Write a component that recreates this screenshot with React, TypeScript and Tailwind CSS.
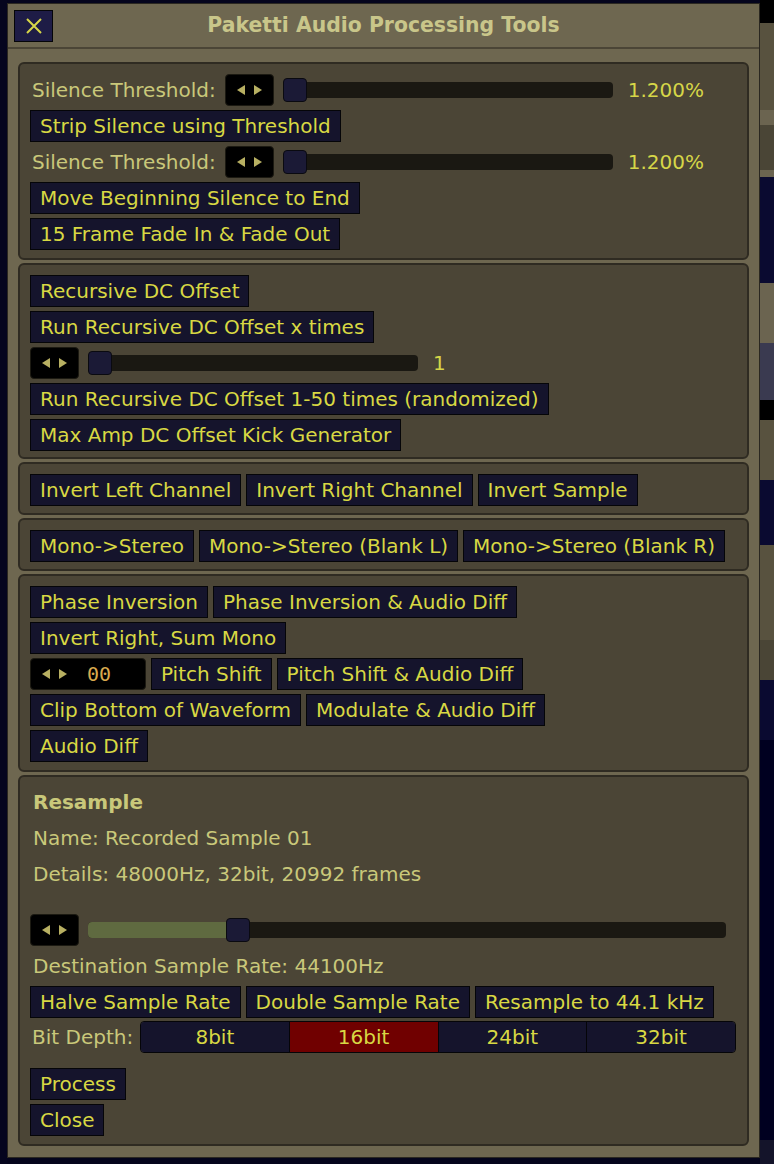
import React from "react"

const font = { fontFamily: '"DejaVu Sans", "Noto Sans", sans-serif' }

const Btn = ({ label }: { label: string }): JSX.Element => (
	<button className="h-[32px] shrink-0 whitespace-nowrap border border-[#050508] bg-[#15142c] px-[9px] text-[20px] leading-none text-[#d8d843]">
		{label}
	</button>
)

const Arrows = ({ value }: { value?: string }): JSX.Element => (
	<div
		className={`flex h-[32px] shrink-0 items-center gap-[7px] rounded-[4px] border border-[#1c1a12] bg-black pl-[10px] ${
			value ? "w-[116px]" : "w-[49px]"
		}`}
	>
		<svg width="10" height="12" viewBox="0 0 10 12">
			<path d="M9 1 L1 6 L9 11 Z" fill="#b8b062" />
		</svg>
		<svg width="10" height="12" viewBox="0 0 10 12">
			<path d="M1 1 L9 6 L1 11 Z" fill="#b8b062" />
		</svg>
		{value && (
			<span className="ml-[12px] text-[20px] text-[#d9a94e]" style={{ fontFamily: '"DejaVu Sans Mono", monospace' }}>
				{value}
			</span>
		)}
	</div>
)

const Slider = ({ width, pos, fill }: { width: string; pos: number; fill?: boolean }): JSX.Element => (
	<div className={`relative flex h-[24px] items-center ${width}`}>
		<div className="h-[16px] w-full overflow-hidden rounded-[4px] bg-[#1a1812]">
			{fill && <div className="h-full bg-[#5f6a40]" style={{ width: pos + 4 }} />}
		</div>
		<div
			className="absolute top-0 h-[24px] w-[24px] rounded-[4px] border border-[#0a0a10] bg-[#1b1a36]"
			style={{ left: pos }}
		/>
	</div>
)

const Panel = ({ children, className }: { children: React.ReactNode; className?: string }): JSX.Element => (
	<div className={`flex flex-col gap-[4px] rounded-[6px] border-2 border-[#2f2b22] bg-[#4b4536] px-[10px] ${className ?? ""}`}>
		{children}
	</div>
)

const Row = ({ children }: { children: React.ReactNode }): JSX.Element => (
	<div className="flex h-[32px] items-center gap-[5px]">{children}</div>
)

const Label = ({ children, className }: { children: React.ReactNode; className?: string }): JSX.Element => (
	<span className={`whitespace-nowrap text-[20px] text-[#c9c87a] ${className ?? ""}`}>{children}</span>
)

const ThresholdRow = (): JSX.Element => (
	<Row>
		<Label className="ml-[2px] mr-[4px]">Silence Threshold:</Label>
		<Arrows />
		<div className="ml-[4px]">
			<Slider width="w-[330px]" pos={0} />
		</div>
		<Label className="ml-[10px] text-[#d6d648]">1.200%</Label>
	</Row>
)

const RightStrip = (): JSX.Element => (
	<div className="flex w-[14px] flex-col">
		<div className="h-[23px] bg-black" />
		<div className="h-[87px] bg-[#58523f]" />
		<div className="h-[15px] bg-[#6b6450]" />
		<div className="h-[45px] bg-[#4a4536]" />
		<div className="h-[7px] bg-[#6b6450]" />
		<div className="h-[106px] bg-[#0a0a30]" />
		<div className="h-[60px] bg-[#6b6450]" />
		<div className="h-[57px] bg-[#3a3a50]" />
		<div className="h-[20px] bg-black" />
		<div className="h-[60px] bg-[#58523f]" />
		<div className="h-[65px] bg-[#0a0a30]" />
		<div className="h-[95px] bg-[#58523f]" />
		<div className="h-[40px] bg-[#4a4536]" />
		<div className="h-[60px] bg-[#0a0a30]" />
		<div className="h-[400px] bg-[#000020]" />
		<div className="flex-1 bg-[#14142a]" />
	</div>
)

const App = (): JSX.Element => {
	return (
		<div className="flex h-[1164px] w-[774px] overflow-hidden bg-[#04041c]" style={font}>
			<div className="w-[7px] bg-[#05051e]" />
			<div className="flex w-[753px] flex-col">
				<div className="mt-[3px] flex h-[1155px] flex-col border border-[#2a2720] bg-[#6e6750]">
					<div className="flex h-[45px] items-center border-b-2 border-[#4b4536] px-[6px]">
						<button className="flex h-[32px] w-[39px] items-center justify-center border border-[#050508] bg-[#1e1c46]">
							<svg width="18" height="18" viewBox="0 0 18 18">
								<path d="M2 2 L16 16 M16 2 L2 16" stroke="#d6d648" strokeWidth="2" />
							</svg>
						</button>
						<div className="flex-1 pr-[39px] text-center text-[20.4px] font-bold text-[#c9c68a]">
							Paketti Audio Processing Tools
						</div>
					</div>
					<div className="mx-[10px] mt-[13px] flex flex-col gap-[3px]">
						<Panel className="h-[198px] pt-[10px]">
							<ThresholdRow />
							<Row>
								<Btn label="Strip Silence using Threshold" />
							</Row>
							<ThresholdRow />
							<Row>
								<Btn label="Move Beginning Silence to End" />
							</Row>
							<Row>
								<Btn label="15 Frame Fade In & Fade Out" />
							</Row>
						</Panel>
						<Panel className="h-[196px] pt-[10px]">
							<Row>
								<Btn label="Recursive DC Offset" />
							</Row>
							<Row>
								<Btn label="Run Recursive DC Offset x times" />
							</Row>
							<Row>
								<Arrows />
								<div className="ml-[4px]">
									<Slider width="w-[330px]" pos={0} />
								</div>
								<Label className="ml-[10px] text-[#d6d648]">1</Label>
							</Row>
							<Row>
								<Btn label="Run Recursive DC Offset 1-50 times (randomized)" />
							</Row>
							<Row>
								<Btn label="Max Amp DC Offset Kick Generator" />
							</Row>
						</Panel>
						<Panel className="h-[53px] pt-[10px]">
							<Row>
								<Btn label="Invert Left Channel" />
								<Btn label="Invert Right Channel" />
								<Btn label="Invert Sample" />
							</Row>
						</Panel>
						<Panel className="h-[53px] pt-[10px]">
							<Row>
								<Btn label="Mono->Stereo" />
								<Btn label="Mono->Stereo (Blank L)" />
								<Btn label="Mono->Stereo (Blank R)" />
							</Row>
						</Panel>
						<Panel className="h-[198px] pt-[10px]">
							<Row>
								<Btn label="Phase Inversion" />
								<Btn label="Phase Inversion & Audio Diff" />
							</Row>
							<Row>
								<Btn label="Invert Right, Sum Mono" />
							</Row>
							<Row>
								<Arrows value="00" />
								<Btn label="Pitch Shift" />
								<Btn label="Pitch Shift & Audio Diff" />
							</Row>
							<Row>
								<Btn label="Clip Bottom of Waveform" />
								<Btn label="Modulate & Audio Diff" />
							</Row>
							<Row>
								<Btn label="Audio Diff" />
							</Row>
						</Panel>
						<Panel className="h-[371px] pt-[9px]">
							<Row>
								<Label className="ml-[3px] font-bold">Resample</Label>
							</Row>
							<Row>
								<Label className="ml-[3px]">Name: Recorded Sample 01</Label>
							</Row>
							<Row>
								<Label className="ml-[3px]">Details: 48000Hz, 32bit, 20992 frames</Label>
							</Row>
							<div className="mt-[20px]">
								<Row>
									<Arrows />
									<div className="ml-[4px]">
										<Slider width="w-[638px]" pos={138} fill />
									</div>
								</Row>
							</div>
							<Row>
								<Label className="ml-[3px]">Destination Sample Rate: 44100Hz</Label>
							</Row>
							<Row>
								<Btn label="Halve Sample Rate" />
								<Btn label="Double Sample Rate" />
								<Btn label="Resample to 44.1 kHz" />
							</Row>
							<div className="-mt-[1px] flex h-[32px] items-center">
								<Label className="ml-[2px] w-[108px]">Bit Depth:</Label>
								<div className="flex h-[32px] w-[596px] overflow-hidden rounded-[4px] border border-[#050508]">
									{["8bit", "16bit", "24bit", "32bit"].map((b) => (
										<div
											key={b}
											className={`flex flex-1 items-center justify-center border-r border-[#050508] text-[20px] last:border-r-0 ${
												b === "16bit" ? "bg-[#700000] text-[#d8d843]" : "bg-[#15142c] text-[#d8d843]"
											}`}
										>
											{b}
										</div>
									))}
								</div>
							</div>
							<div className="mt-[11px]">
								<Row>
									<Btn label="Process" />
								</Row>
							</div>
							<Row>
								<Btn label="Close" />
							</Row>
						</Panel>
					</div>
				</div>
			</div>
			<RightStrip />
		</div>
	)
}

export default App
